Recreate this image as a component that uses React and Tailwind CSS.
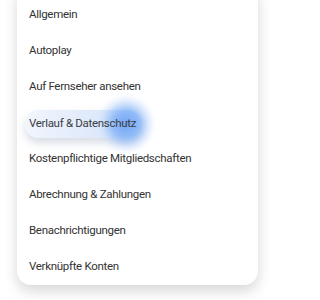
const items = [
  'Allgemein',
  'Autoplay',
  'Auf Fernseher ansehen',
  'Verlauf & Datenschutz',
  'Kostenpflichtige Mitgliedschaften',
  'Abrechnung & Zahlungen',
  'Benachrichtigungen',
  'Verknüpfte Konten',
];

export default function App() {
  return (
    <div className="h-[300px] w-[278px] overflow-hidden bg-white" style={{ fontFamily: 'Roboto, "Noto Sans", sans-serif' }}>
      <div className="ml-[17px] mt-[-16px] w-[241px] rounded-[14px] bg-white pt-[13px] shadow-[0_6px_14px_rgba(0,0,0,0.16)]">
        {items.map((label) => (
          <MenuRow key={label} label={label} active={label === 'Verlauf & Datenschutz'} />
        ))}
      </div>
    </div>
  );
}

function MenuRow({ label, active }) {
  if (active) {
    return (
      <div className="flex h-9 items-center pl-[8px]">
        <span className="relative flex h-[28px] w-[117px] translate-y-[1px] items-center rounded-full bg-gradient-to-r from-[#f1f5fd] via-[#e2ebfb] to-[#cfe0fa] pl-[4px] shadow-[0_5px_9px_rgba(60,80,120,0.2)]">
          <span className="absolute left-[70px] top-[-17px] h-[62px] w-[62px] rounded-full bg-[radial-gradient(circle,rgba(110,162,244,0.95)_0%,rgba(130,178,247,0.8)_30%,rgba(180,208,250,0.4)_52%,rgba(220,232,252,0.15)_64%,rgba(255,255,255,0)_72%)]"></span>
          <span className="relative text-[11.5px] tracking-[-0.3px] text-[#3a3d44]">{label}</span>
        </span>
      </div>
    );
  }
  return (
    <div className="flex h-9 items-center pl-[12px] text-[11.5px] tracking-[-0.3px] text-[#333333]">
      {label}
    </div>
  );
}
